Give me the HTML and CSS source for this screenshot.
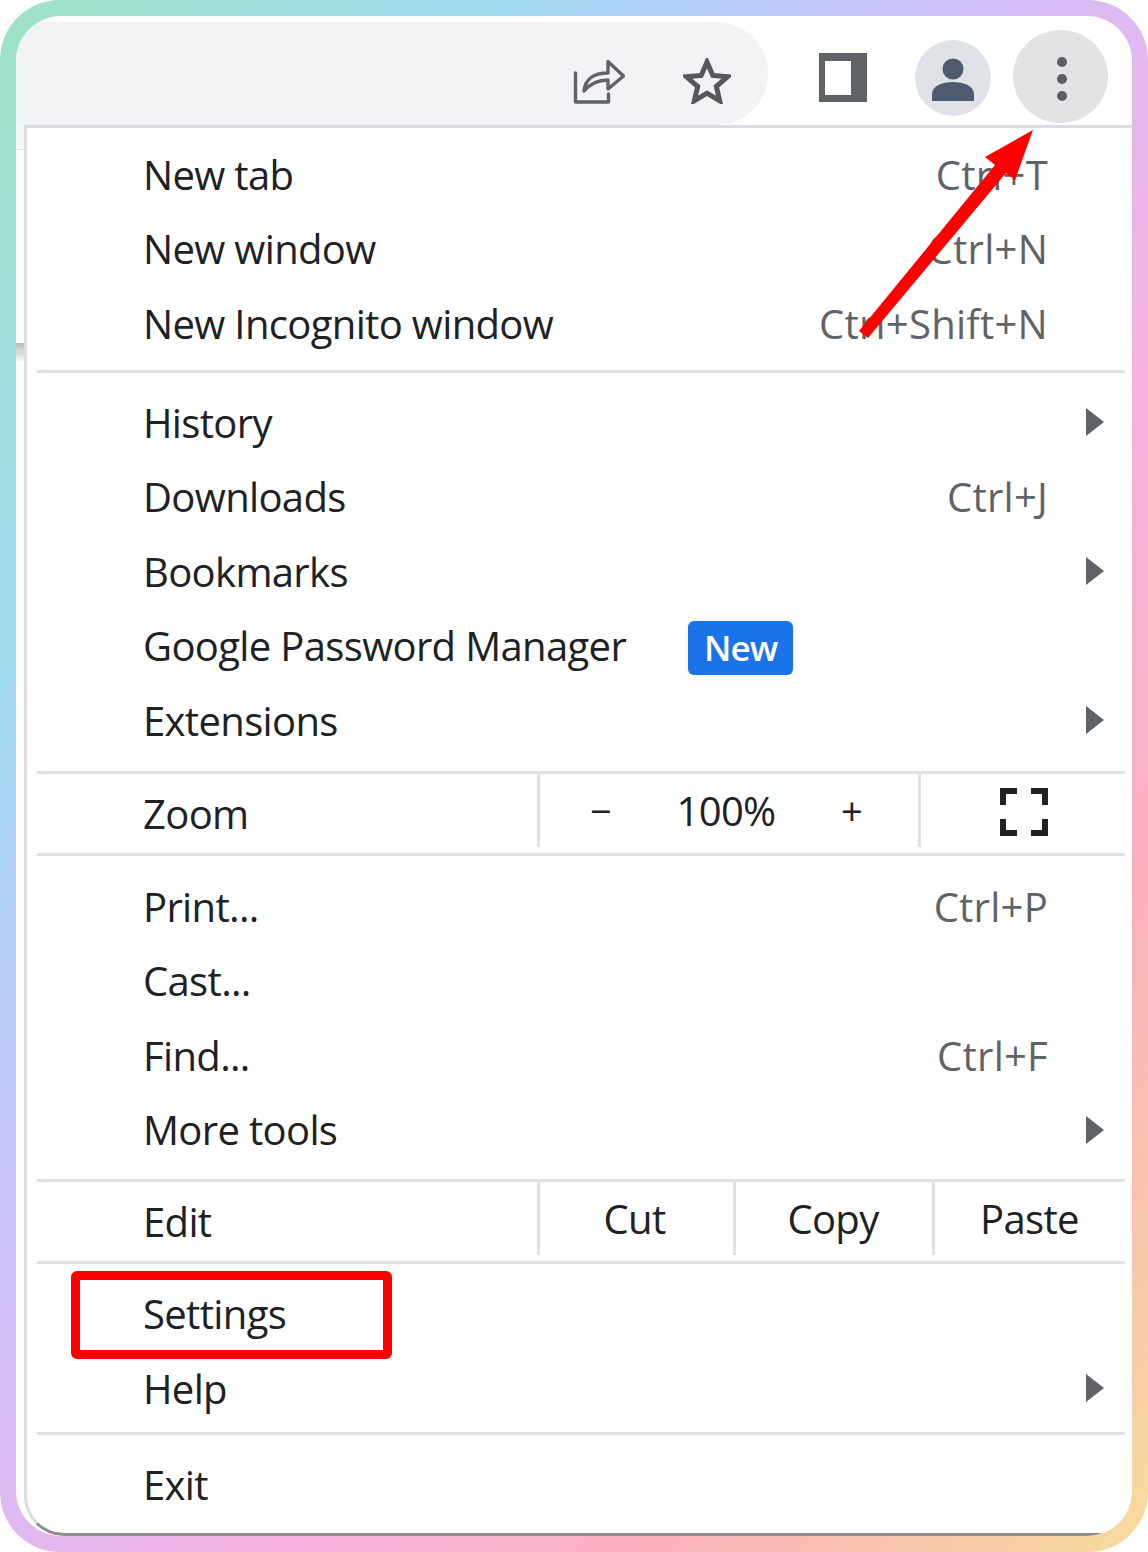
FILE: index.html
```html
<!DOCTYPE html>
<html lang="en">
<head>
<meta charset="utf-8">
<title>Chrome menu</title>
<link rel="stylesheet" href="styles.css">
</head>
<body>
<div class="frame">
  <div class="window">
    <header class="toolbar">
      <div class="omnibox">
        <svg class="ic-share" viewBox="0 0 52 46" fill="none" stroke="#5f6368" stroke-width="3.4" stroke-linejoin="round" stroke-linecap="round"><path d="M2.500 15v29h33v-8"/><path d="M11 33c1-11 9-18 24-18V3.500L50.500 18 35 31V22C24 22 17 26 11 33z"/></svg>
        <svg class="ic-star" viewBox="0 0 48 46" fill="none" stroke="#55585d" stroke-width="5" stroke-linejoin="miter"><path d="M24 4l5.800 13.500 14.700 1.300-11.200 9.700 3.400 14.300L24 35.200l-12.700 7.600 3.400-14.300L3.500 18.800l14.700-1.300z"/></svg>
      </div>
      <svg class="ic-panel" viewBox="0 0 48 49"><path fill="#5f6368" fill-rule="evenodd" d="M0 0h48v49H0zM6 8v34h26V8z"/></svg>
      <div class="avatar">
        <svg viewBox="0 0 44 43" class="ic-person"><circle cx="22" cy="11" r="10.500" fill="#4d5a70"/><path fill="#4d5a70" d="M1 43v-7c0-8 10-12 21-12s21 4 21 12v7z"/></svg>
      </div>
      <div class="kebab"><i></i><i></i><i></i></div>
    </header>

    <div class="body-row">
      <div class="gutter"><span class="gutter-top"></span><span class="gutter-shadow"></span></div>
      <nav class="menu">
        <section class="group g1">
          <div class="item"><span class="label">New tab</span><span class="key">Ctrl+T</span></div>
          <div class="item"><span class="label">New window</span><span class="key">Ctrl+N</span></div>
          <div class="item"><span class="label">New Incognito window</span><span class="key">Ctrl+Shift+N</span></div>
        </section>
        <hr class="sep">
        <section class="group g2">
          <div class="item"><span class="label">History</span><span class="chev"></span></div>
          <div class="item"><span class="label">Downloads</span><span class="key">Ctrl+J</span></div>
          <div class="item"><span class="label">Bookmarks</span><span class="chev"></span></div>
          <div class="item"><span class="label">Google Password Manager</span><span class="badge">New</span></div>
          <div class="item"><span class="label">Extensions</span><span class="chev"></span></div>
        </section>
        <hr class="sep">
        <section class="split">
          <span class="label split-label">Zoom</span>
          <div class="cell zoom-ctl"><span class="zm">−</span><span class="pct">100%</span><span class="zp">+</span></div>
          <div class="cell full">
            <svg class="ic-full" viewBox="0 0 48 48" fill="none" stroke="#202124" stroke-width="6"><path d="M3 17V3h14M31 3h14v14M3 31v14h14M31 45h14V31"/></svg>
          </div>
        </section>
        <hr class="sep">
        <section class="group g3">
          <div class="item"><span class="label">Print...</span><span class="key">Ctrl+P</span></div>
          <div class="item"><span class="label">Cast...</span></div>
          <div class="item"><span class="label">Find...</span><span class="key">Ctrl+F</span></div>
          <div class="item"><span class="label">More tools</span><span class="chev"></span></div>
        </section>
        <hr class="sep">
        <section class="split">
          <span class="label split-label">Edit</span>
          <div class="cell c-cut">Cut</div>
          <div class="cell c-copy">Copy</div>
          <div class="cell c-paste">Paste</div>
        </section>
        <hr class="sep">
        <section class="group g4">
          <div class="item"><span class="label">Settings</span></div>
          <div class="item"><span class="label">Help</span><span class="chev"></span></div>
        </section>
        <hr class="sep">
        <section class="group g5">
          <div class="item"><span class="label">Exit</span></div>
        </section>
      </nav>
    </div>
  </div>
  <div class="highlight"></div>
  <svg class="arrow" viewBox="0 0 1148 1552"><path fill="#ff0000" d="M1033 130l-18 50-9-7-138 165-9-7 136-166-10-8z"/></svg>
</div>
</body>
</html>
```
FILE: styles.css
```css
* { box-sizing: border-box; }
html, body { margin: 0; background: #fff; }
body { font-family: "Open Sans", "Liberation Sans", sans-serif; color: #202124; }

.frame {
  position: relative;
  width: 1148px;
  height: 1552px;
  padding: 16px;
  border-radius: 60px;
  background: linear-gradient(to bottom right, #9fe3c4 0%, #9ed9ef 22%, #c9c0fa 40%, #e0b9f0 50%, #f6b2e0 62%, #f9b0bc 78%, #f7dc9c 100%);
}
.window {
  display: flex;
  flex-direction: column;
  height: 100%;
  background: #fff;
  border-radius: 45px;
  overflow: hidden;
}

/* toolbar */
.toolbar { display: flex; align-items: flex-start; height: 109px; flex: none; }
.omnibox {
  display: flex;
  align-items: center;
  justify-content: flex-end;
  gap: 58px;
  width: 752px;
  height: 103px;
  margin-top: 6px;
  padding: 14px 37px 0 0;
  background: #f1f3f4;
  border-radius: 0 52px 52px 0;
}
.ic-share { width: 52px; height: 46px; }
.ic-star { width: 48px; height: 46px; }
.ic-panel { width: 48px; height: 49px; margin: 37px 0 0 51px; flex: none; }
.avatar {
  display: flex;
  align-items: center;
  justify-content: center;
  width: 76px;
  height: 76px;
  margin: 24px 0 0 48px;
  border-radius: 50%;
  background: #dfe2e7;
}
.ic-person { width: 44px; height: 43px; margin-top: 2px; }
.kebab {
  display: flex;
  flex-direction: column;
  align-items: center;
  justify-content: center;
  gap: 7px;
  width: 95px;
  height: 93px;
  margin: 14px 0 0 22px;
  padding: 4px 0 0 3px;
  border-radius: 50%;
  background: #e3e3e3;
}
.kebab i { width: 10px; height: 10px; border-radius: 50%; background: #5b5f65; }

/* menu */
.body-row { display: flex; flex: 1; min-height: 0; }
.gutter { display: flex; flex-direction: column; width: 8px; flex: none; }
.gutter-top { height: 25px; background: #f7f7f8; border-bottom: 1px solid #e6e6e6; }
.gutter-shadow { height: 18px; margin-top: 193px; background: linear-gradient(#bbb, #f6f6f6); }
.menu {
  flex: 1;
  display: flex;
  flex-direction: column;
  border-top: 3px solid #dcdde2;
  border-left: 3px solid #dcdde2;
  border-bottom: 3px solid #8d8d8d;
  background: #fff;
  border-bottom-left-radius: 40px;
}
.sep { flex: none; height: 3px; margin: 0 7px 0 10px; border: 0; background: #e0e1e5; }

.group { display: flex; flex-direction: column; padding: 0 0 0 116px; }
.g1 { padding-top: 9px; padding-bottom: 9px; }
.g2 { padding-top: 12px; padding-bottom: 13px; }
.g3 { padding-top: 13px; padding-bottom: 12px; }
.g4 { padding-top: 12px; padding-bottom: 7px; }
.g5 { padding-top: 12px; }

.item {
  position: relative;
  display: flex;
  align-items: center;
  height: 74.6px;
  font-size: 40px;
  letter-spacing: -0.65px;
}
.label { font-size: 40px; letter-spacing: -0.65px; white-space: nowrap; }
.key {
  position: absolute;
  right: 84px;
  color: #5f6368;
  letter-spacing: 0.25px;
  white-space: nowrap;
}
.chev {
  position: absolute;
  right: 28px;
  width: 0;
  height: 0;
  border-left: 18px solid #5f6368;
  border-top: 14px solid transparent;
  border-bottom: 14px solid transparent;
}
.badge {
  display: flex;
  align-items: center;
  justify-content: center;
  width: 105px;
  height: 54px;
  margin: 4px 0 0 62px;
  background: #1a73e8;
  color: #fff;
  border-radius: 6px;
  font-size: 35px;
  font-weight: 600;
  letter-spacing: -1px;
}

.split { display: flex; height: 79px; flex: none; padding-left: 116px; }
.split-label { width: 394px; padding-top: 12px; flex: none; }
.cell {
  display: flex;
  align-items: center;
  height: 73px;
  border-left: 3px solid #e0e1e5;
  font-size: 40px;
  letter-spacing: -0.65px;
  flex: none;
  justify-content: center;
}
.zoom-ctl { width: 381px; justify-content: space-between; padding: 0 56px 0 50px; }
.pct { color: #202124; }
.zm, .zp { font-size: 38px; }
.full { width: 206px; padding: 4px 0 0 3px; }
.ic-full { width: 48px; height: 48px; }
.c-cut { width: 196px; padding-right: 4px; }
.c-copy { width: 199px; padding-right: 2px; }
.c-paste { width: 192px; }

/* annotations */
.highlight {
  position: absolute;
  left: 71px;
  top: 1271px;
  width: 321px;
  height: 88px;
  border: 9px solid #ff0000;
  border-radius: 6px;
}
.arrow { position: absolute; left: 0; top: 0; width: 1148px; height: 1552px; pointer-events: none; }
```
